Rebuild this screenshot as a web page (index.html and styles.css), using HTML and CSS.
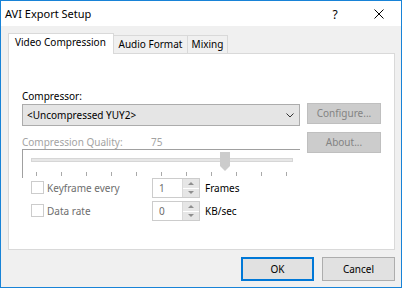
FILE: index.html
```html
<!DOCTYPE html>
<html>
<head>
  <title>AVI Export Setup</title>
  <link rel="stylesheet" href="styles.css">
</head>
<body>
  <div class="window">
    <div class="titlebar">
      <span class="title">AVI Export Setup</span>
      <span class="cap-btn help">?</span>
      <span class="cap-btn close">
        <svg width="10" height="10" viewBox="0 0 10 10"><path d="M0.5 0.5 L9.5 9.5 M9.5 0.5 L0.5 9.5" stroke="#000" stroke-width="1" fill="none"/></svg>
      </span>
    </div>

    <div class="dialog">
      <div class="tabs">
        <div class="tab active t-video">Video Compression</div>
        <div class="tab t-audio">Audio Format</div>
        <div class="tab t-mix">Mixing</div>
      </div>

      <div class="panel">
        <div class="compress-row">
          <div class="left-col">
            <div class="label">Compressor:</div>
            <div class="combo">
              <span>&lt;Uncompressed YUY2&gt;</span>
              <svg width="8" height="5" viewBox="0 0 8 5"><polyline points="0.5,0.5 4,4 7.5,0.5" stroke="#333" stroke-width="1" fill="none"/></svg>
            </div>
            <div class="quality">
              <span class="q-label">Compression Quality:</span>
              <span>75</span>
            </div>
            <div class="track-frame">
              <div class="channel">
                <svg class="thumb" width="10" height="19" viewBox="0 0 10 19"><polygon points="0,0 10,0 10,14 5,19 0,14" fill="#cccccc"/></svg>
              </div>
              <div class="ticks">
                <i></i><i></i><i></i><i></i><i></i><i></i><i></i><i></i><i></i><i></i><i></i>
              </div>
            </div>
          </div>
          <div class="right-col">
            <div class="btn disabled">Configure...</div>
            <div class="btn disabled">About...</div>
          </div>
        </div>

        <div class="opt-row">
          <span class="check"></span>
          <span class="opt-label">Keyframe every</span>
          <div class="spin">
            <span class="spin-val">1</span>
            <div class="spin-btns"><b class="up"></b><b class="down"></b></div>
          </div>
          <span class="unit">Frames</span>
        </div>
        <div class="opt-row">
          <span class="check"></span>
          <span class="opt-label">Data rate</span>
          <div class="spin">
            <span class="spin-val">0</span>
            <div class="spin-btns"><b class="up"></b><b class="down"></b></div>
          </div>
          <span class="unit">KB/sec</span>
        </div>
      </div>

      <div class="buttons">
        <div class="btn default">OK</div>
        <div class="btn">Cancel</div>
      </div>
    </div>
  </div>
</body>
</html>
```

FILE: styles.css
```css
body {
  margin: 0;
  font-family: "Noto Sans", "Open Sans", sans-serif;
  font-size: 10px;
  background: #ffffff;
}
.window {
  box-sizing: border-box;
  width: 402px;
  height: 288px;
  border: 1px solid #1883d7;
  background: #f0f0f0;
  display: flex;
  flex-direction: column;
}
.titlebar {
  height: 25px;
  background: #ffffff;
  display: flex;
  align-items: center;
  padding-left: 4px;
  padding-bottom: 1px;
  box-sizing: border-box;
}
.title {
  flex: 1;
  font-size: 11px;
  color: #000;
}
.cap-btn {
  width: 45px;
  height: 24px;
  display: flex;
  align-items: center;
  justify-content: center;
}
.help {
  font-size: 12px;
  padding-left: 3px;
  box-sizing: border-box;
  margin-top: 2px;
}
.close svg {
  display: block;
  margin-top: 1px;
}
.dialog {
  flex: 1;
  padding: 7px 6px 0 7px;
  display: flex;
  flex-direction: column;
}
.tabs {
  display: flex;
  align-items: flex-end;
}
.tab {
  box-sizing: border-box;
  height: 18px;
  line-height: 13px;
  padding-top: 2px;
  border: 1px solid #d9d9d9;
  border-bottom: none;
  text-align: center;
  color: #000;
  margin-left: -1px;
}
.tab.active {
  position: relative;
  height: 21px;
  margin-left: 0;
  margin-bottom: -1px;
  background: #ffffff;
  text-align: left;
  padding-left: 6px;
}
.t-video { width: 106px; }
.t-audio { width: 75px; }
.t-mix { width: 41px; }

.panel {
  box-sizing: border-box;
  height: 197px;
  background: #ffffff;
  border: 1px solid #d9d9d9;
  padding: 36px 13px 0 13px;
}
.compress-row {
  display: flex;
}
.left-col {
  width: 279px;
}
.label {
  line-height: 13px;
  color: #000;
}
.combo {
  box-sizing: border-box;
  margin-top: 1px;
  height: 22px;
  border: 1px solid #acacac;
  background: #e5e5e5;
  display: flex;
  align-items: center;
  justify-content: space-between;
  padding: 0 5px 0 4px;
  line-height: 20px;
}
.combo svg {
  display: block;
  margin-top: 1px;
}
.quality {
  display: flex;
  margin-top: 10px;
  line-height: 13px;
  color: #a3a3a3;
}
.q-label {
  width: 129px;
}
.track-frame {
  box-sizing: border-box;
  height: 29px;
  border-top: 1px solid #a0a0a0;
  border-left: 1px solid #a0a0a0;
}
.channel {
  position: relative;
  box-sizing: border-box;
  width: 262px;
  height: 4px;
  margin: 8px 0 0 8px;
  background: #e7e7e7;
  border: 1px solid #d6d6d6;
}
.thumb {
  position: absolute;
  left: 188px;
  top: -7px;
}
.ticks {
  display: flex;
  justify-content: space-between;
  width: 251px;
  margin: 10px 0 0 13px;
}
.ticks i {
  display: block;
  width: 1px;
  height: 4px;
  background: #a9a9a9;
}
.right-col {
  margin-left: 7px;
  padding-top: 13px;
  display: flex;
  flex-direction: column;
  gap: 8px;
}
.btn {
  box-sizing: border-box;
  width: 74px;
  height: 21px;
  border: 1px solid #adadad;
  background: #e1e1e1;
  text-align: center;
  line-height: 19px;
  color: #000;
}
.btn.disabled {
  background: #cccccc;
  border-color: #bfbfbf;
  color: #838383;
}

.opt-row {
  display: flex;
  align-items: center;
  height: 20px;
  margin-left: 9px;
  margin-bottom: 3px;
}
.opt-row:first-of-type {
  margin-top: 13px;
}
.check {
  box-sizing: border-box;
  width: 13px;
  height: 13px;
  border: 1px solid #cccccc;
  background: #fff;
  margin-top: -1px;
}
.opt-label {
  width: 105px;
  padding-left: 3px;
  line-height: 13px;
  color: #6d6d6d;
}
.spin {
  box-sizing: border-box;
  width: 48px;
  height: 20px;
  border: 1px solid #cccccc;
  display: flex;
}
.spin-val {
  flex: 1;
  padding-left: 6px;
  line-height: 18px;
  color: #6d6d6d;
}
.spin-btns {
  width: 16px;
  border-left: 1px solid #d9d9d9;
  display: flex;
  flex-direction: column;
  gap: 1px;
  background: #ffffff;
}
.spin-btns b {
  flex: 1;
  background: #e6e6e6;
  display: flex;
  align-items: center;
  justify-content: center;
}
.spin-btns b::after {
  content: "";
  width: 0;
  height: 0;
  border-left: 3px solid transparent;
  border-right: 3px solid transparent;
}
.spin-btns .up::after {
  border-bottom: 3px solid #8f8f8f;
}
.spin-btns .down::after {
  border-top: 3px solid #8f8f8f;
}
.unit {
  margin-left: 5px;
  line-height: 13px;
  color: #000;
}

.buttons {
  display: flex;
  justify-content: flex-end;
  gap: 8px;
  margin-top: 7px;
}
.buttons .btn {
  width: 73px;
  height: 24px;
  line-height: 22px;
}
.btn.default {
  border: 2px solid #0078d7;
  line-height: 20px;
}
```
